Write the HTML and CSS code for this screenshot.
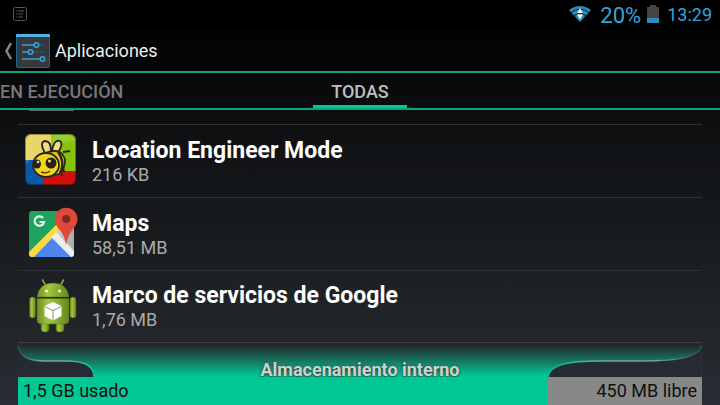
FILE: index.html
```html
<!DOCTYPE html>
<html lang="es">
<head>
    <meta charset="UTF-8">
    <meta name="viewport" content="width=device-width, initial-scale=1.0">
    <title>Aplicaciones</title>
    <link rel="stylesheet" href="styles.css">
</head>
<body>
    <div class="status-bar">
        <svg class="notification" width="16" height="16" viewBox="0 0 16 16" fill="none" stroke="#5a5a5a">
            <rect x="1.5" y="1.5" width="13" height="13" rx="2"/>
            <path d="M4 5h1M6 5h6M4 8h1M6 8h5M4 11h1M6 11h5"/>
        </svg>
        <div class="status-icons">
            <svg width="24" height="18" viewBox="0 0 24 18">
                <path d="M1 5Q12 -3 23 5L12 17Z" fill="#2b8cba"/>
                <path d="M3 7.500Q12 0.500 21 7.500M6 11Q12 5.500 18 11" fill="none" stroke="#04212e" stroke-width="1"/>
                <path d="M12 3L14.800 8h-5.600ZM12 14.500L14.800 9.500h-5.600Z" fill="#fff"/>
            </svg>
            <span class="battery-level">20%</span>
            <svg class="battery" width="12" height="18" viewBox="0 0 12 18">
                <path d="M3 0h6v2h3v16H0V2h3Z" fill="#444"/>
                <path d="M0 13h12v5H0Z" fill="#2b8cba"/>
            </svg>
            <span class="clock">13:29</span>
        </div>
    </div>

    <header class="action-bar">
        <button class="back" aria-label="Atrás">
            <svg width="10" height="18" viewBox="0 0 10 18" fill="none" stroke="#888" stroke-width="2.500">
                <path d="M8 1L3.500 9L8 17"/>
            </svg>
            <svg width="34" height="34" viewBox="0 0 34 34">
                <rect x="0.500" y="0.500" width="33" height="33" rx="1" fill="#35393c" stroke="#1f6690"/>
                <path d="M0 1q0-1 1-1h32q1 0 1 1v2H0Z" fill="#4cb3e6"/>
                <path d="M6 11h12M6 18h6M6 25h19" stroke="#3b9fd4" stroke-width="1.500"/>
                <path d="M23 11h6M17 18h12" stroke="#24516c" stroke-width="1.500"/>
                <g fill="#274455" stroke="#3b9fd4" stroke-width="1.500">
                    <circle cx="20.500" cy="11" r="2.300"/>
                    <circle cx="14.500" cy="18" r="2.300"/>
                    <circle cx="26.500" cy="25" r="2.300"/>
                </g>
            </svg>
        </button>
        <h1>Aplicaciones</h1>
    </header>

    <nav class="tabs">
        <button class="tab tab-left">EN EJECUCIÓN</button>
        <button class="tab active">TODAS</button>
    </nav>

    <main class="app-list">
        <div class="app-cut">
            <div class="cut-icon"></div>
        </div>

        <div class="app">
            <svg class="app-icon" width="56" height="56" viewBox="0 0 56 56">
                <defs>
                    <clipPath id="tile"><rect x="3" y="2" width="51" height="51" rx="6"/></clipPath>
                </defs>
                <g clip-path="url(#tile)">
                    <path d="M3 2h26v26H3Z" fill="#e6cf52"/>
                    <path d="M29 2h25v38H29Z" fill="#86c20a"/>
                    <path d="M3 27h18v27H3Z" fill="#0a5aa5"/>
                    <path d="M21 39h33v15H21Z" fill="#d0100c"/>
                    <path d="M3 28h20V22h10v17H21V27H3Z" fill="#e6cf52"/>
                    <path d="M3 2h51v6Q24 12 3 33Z" fill="#fff" opacity="0.150"/>
                </g>
                <rect x="3.500" y="2.500" width="50" height="50" rx="6" fill="none" stroke="#000" stroke-opacity="0.350"/>
                <g stroke="#29281c" stroke-width="1.800">
                    <path d="M23 21Q17 10 23 9Q29 9 29 19ZM30 19Q32 7 38 9Q42 12 35 22Z" fill="#f0df80"/>
                    <path d="M27 20Q40 16 43 28Q43 37 37 42Q31 44 26 41Z" fill="#e8c718"/>
                    <path d="M36 20Q43 29 39 40" fill="none" stroke-width="2.500"/>
                    <path d="M41 20l7-1M41 35l1 5M38 39l2 5" fill="none" stroke-width="2"/>
                    <ellipse cx="24" cy="33" rx="13" ry="12" fill="#f4d51e"/>
                </g>
                <ellipse cx="15" cy="32" rx="4" ry="4.500" fill="#24221c"/>
                <circle cx="29" cy="31" r="5.500" fill="#24221c"/>
                <circle cx="16" cy="30" r="1.300" fill="#eee18c"/>
                <circle cx="27.500" cy="29" r="1.500" fill="#eee18c"/>
                <path d="M19 40Q25 42 28 39" fill="none" stroke="#554516" stroke-width="1.500"/>
            </svg>
            <div class="app-info">
                <h2>Location Engineer Mode</h2>
                <p>216 KB</p>
            </div>
        </div>

        <div class="app">
            <svg class="app-icon" width="56" height="56" viewBox="0 0 56 56">
                <defs>
                    <clipPath id="map"><rect x="7" y="6" width="45" height="46" rx="3"/></clipPath>
                    <linearGradient id="fold"><stop offset="0" stop-color="#ddd"/><stop offset="1" stop-color="#aaa"/></linearGradient>
                </defs>
                <g clip-path="url(#map)">
                    <path d="M7 6h45v46H7Z" fill="#20a35f"/>
                    <path d="M52 10v42L29 30Z" fill="url(#fold)"/>
                    <path d="M9 52L30 31L51 52Z" fill="#4c86ee"/>
                    <path d="M7 47L36 18L40 23L12 52H7Z" fill="#fdd940"/>
                    <path d="M29 32L34 27L54 48V52H49Z" fill="#eee"/>
                </g>
                <path d="M21 13A4.700 4.700 0 1 0 22 17H17.500" fill="none" stroke="#e9f5ee" stroke-width="2.200"/>
                <path d="M44 40Q43 30 36 23Q33 19 33 14A11.200 11.200 0 0 1 55.400 14Q55.400 19 51 24Q46 30 44 40Z" fill="#de493c"/>
                <circle cx="44.200" cy="14" r="4" fill="#7d2820"/>
            </svg>
            <div class="app-info">
                <h2>Maps</h2>
                <p>58,51 MB</p>
            </div>
        </div>

        <div class="app">
            <svg class="app-icon" width="56" height="56" viewBox="0 0 56 56">
                <defs>
                    <linearGradient id="droid"><stop offset="0" stop-color="#6d8f1c"/><stop offset="0.350" stop-color="#a3c83e"/><stop offset="1" stop-color="#67881a"/></linearGradient>
                </defs>
                <path d="M20.500 3L24 9M41.500 3L38 9" stroke="#8cae31" stroke-width="1.500" stroke-linecap="round"/>
                <g fill="url(#droid)" stroke="#4c6812" stroke-width="0.500">
                    <rect x="19" y="42" width="8" height="13" rx="3"/>
                    <rect x="34" y="42" width="8" height="13" rx="3"/>
                    <path d="M15 20Q17 6 31 6Q45 6 47 20Z"/>
                    <rect x="7.500" y="20" width="6" height="21" rx="3"/>
                    <rect x="48" y="20" width="6" height="21" rx="3"/>
                    <path d="M15 21.500h32V43q0 4-4 4H19q-4 0-4-4Z"/>
                </g>
                <circle cx="24.500" cy="14" r="1.500" fill="#f4f7ea"/>
                <circle cx="37.500" cy="14" r="1.500" fill="#f4f7ea"/>
                <path d="M31 25L39.500 29V39L31 43.500L22.500 39V29Z" fill="#fff"/>
                <path d="M22.500 29.500L31 33.500L39.500 29.500M31 33.500V43" fill="none" stroke="#829764" stroke-width="1"/>
            </svg>
            <div class="app-info">
                <h2>Marco de servicios de Google</h2>
                <p>1,76 MB</p>
            </div>
        </div>
    </main>

    <footer class="storage">
        <div class="storage-top">
            <svg class="corner-left" viewBox="0 0 76 32" preserveAspectRatio="none">
                <defs>
                    <linearGradient id="edge"><stop offset="0" stop-color="#2c5049"/><stop offset="0.300" stop-color="#72a597"/><stop offset="0.600" stop-color="#72a597"/><stop offset="1" stop-color="#00c794"/></linearGradient>
                </defs>
                <path d="M0 0C2 13 12 16 28 16H48C66 16 76 20 76 32H0Z" fill="#262a32"/>
                <path d="M0 0C2 13 12 16 28 16H48C66 16 76 20 76 32" fill="none" stroke="url(#edge)" stroke-width="1.500"/>
            </svg>
            <h2>Almacenamiento interno</h2>
            <svg class="corner-right" viewBox="0 0 154 32" preserveAspectRatio="none">
                <defs>
                    <linearGradient id="edge2"><stop offset="0" stop-color="#00c794"/><stop offset="0.400" stop-color="#72a597"/><stop offset="0.700" stop-color="#72a597"/><stop offset="1" stop-color="#2c5049"/></linearGradient>
                </defs>
                <path d="M0 32C2 19 22 16 52 16H94C134 16 152 11 154 0V32Z" fill="#262a32"/>
                <path d="M0 32C2 19 22 16 52 16H94C134 16 152 11 154 0" fill="none" stroke="url(#edge2)" stroke-width="1.500"/>
            </svg>
        </div>
        <div class="storage-bar">
            <span class="used" style="width: 77.5%">1,5 GB usado</span>
            <span class="free">450 MB libre</span>
        </div>
    </footer>
</body>
</html>
```

FILE: styles.css
```css
* {
    box-sizing: border-box;
}
body {
    display: flex;
    flex-direction: column;
    min-height: 100vh;
    margin: 0;
    font-family: Roboto, sans-serif;
    background: linear-gradient(#000 0, #030404 12%, #0e1012 32%, #23272b 85%, #282c36 100%);
    color: white;
}
h1, h2, p {
    margin: 0;
}
button {
    padding: 0;
    border: none;
    background: none;
    color: inherit;
    font-family: inherit;
    cursor: pointer;
}
svg {
    display: block;
}
.status-bar {
    display: flex;
    justify-content: space-between;
    align-items: center;
    height: 29px;
    padding: 0 8px 2px 12px;
    background: #000;
}
.status-icons {
    display: flex;
    align-items: center;
    color: #33a5dc;
}
.battery-level {
    margin: 0 6px 0 8px;
    padding-top: 3px;
    font-size: 22px;
    line-height: 27px;
}
.clock {
    margin-left: 8px;
    padding-top: 2px;
    font-size: 18px;
    line-height: 27px;
}
.action-bar {
    display: flex;
    align-items: center;
    gap: 5px;
    height: 42px;
    padding: 1px 0 0 3px;
}
.action-bar h1 {
    font-size: 18px;
    line-height: 24px;
    font-weight: 400;
    color: #eee;
}
.back {
    display: flex;
    align-items: center;
    gap: 3px;
}
.tabs {
    display: grid;
    grid-template-columns: 1fr 94px 1fr;
    height: 39px;
    border-top: 2px solid #08a67e;
    border-bottom: 2px solid #08a67e;
}
.tab {
    padding-top: 1px;
    font-size: 18px;
    font-weight: 500;
    color: #77787a;
}
.tab-left {
    text-align: left;
}
.tab.active {
    border-top: 3px solid transparent;
    border-bottom: 3px solid #00c794;
    color: #bebebe;
}
.app-list {
    flex: 1;
    padding: 0 18px;
}
.app-cut {
    height: 14px;
    padding-left: 11px;
}
.cut-icon {
    width: 45px;
    height: 1px;
    background: #666;
}
.app {
    display: flex;
    align-items: center;
    gap: 14px;
    height: 73px;
    padding: 0 0 3px 4px;
    border-top: 1px solid #2f3235;
}
.app:last-child {
    border-bottom: 1px solid #3b3f43;
}
.app-info {
    padding-top: 3px;
}
.app-info h2 {
    font-size: 23px;
    line-height: 27px;
    font-weight: 700;
}
.app-info p {
    font-size: 18px;
    line-height: 22px;
    color: #a9aaab;
}
.storage {
    padding: 0 18px;
}
.storage-top {
    display: grid;
    grid-template-columns: 11.1% 1fr 22.5%;
    height: 34px;
    padding-top: 2px;
    background: linear-gradient(#23272b 5%, #157a63 55%, #00c794 96%);
}
.storage-top h2 {
    grid-area: 1 / 1 / 2 / 4;
    align-self: end;
    text-align: center;
    font-size: 18px;
    line-height: 14px;
    font-weight: 700;
    color: #d0d0d0;
    text-shadow: 0 1px 3px #222;
}
.corner-left, .corner-right {
    width: 100%;
    height: 32px;
}
.corner-left {
    grid-area: 1 / 1;
}
.corner-right {
    grid-area: 1 / 3;
}
.storage-bar {
    display: flex;
    font-size: 18px;
    line-height: 28px;
    color: #101010;
}
.used {
    padding-left: 5px;
    background: #00c794;
}
.free {
    flex: 1;
    padding-right: 5px;
    text-align: right;
    background: #888;
}
```
